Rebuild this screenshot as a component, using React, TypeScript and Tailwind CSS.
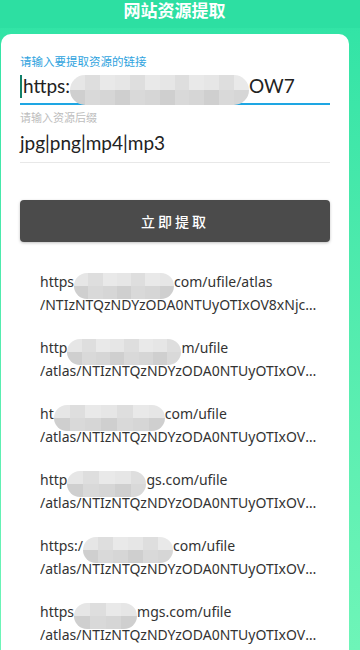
import React from 'react';

const font = { fontFamily: '"Noto Sans", "Noto Sans CJK SC", sans-serif' };
const inputFont = { fontFamily: 'Lato, "Noto Sans CJK SC", sans-serif' };

const greys = ['bg-[#e6e6e6]', 'bg-[#d6d6d6]', 'bg-[#dedede]', 'bg-[#cfcfcf]', 'bg-[#e9e9e9]', 'bg-[#d9d9d9]'];

// privacy mosaic blob sitting over the url text
const Mosaic: React.FC<{ w: number; h: number }> = ({ w, h }) => {
  const cols = Math.max(3, Math.round(w / 15));
  return (
    <span
      className="relative inline-flex flex-col overflow-hidden rounded-full align-middle blur-[0.6px]"
      style={{ width: w, height: h }}
    >
      {[0, 1].map((r) => (
        <span key={r} className="flex flex-1">
          {Array.from({ length: cols }).map((_, c) => (
            <span key={c} className={`flex-1 ${greys[(c * 2 + r * 3) % greys.length]}`} />
          ))}
        </span>
      ))}
    </span>
  );
};

const links = [
  { pre: 'https', w: 100, post: 'com/ufile/atlas', tail: '/NTIzNTQzNDYzODA0NTUyOTIxOV8xNjc4OTAxMjM0NTY3' },
  { pre: 'http', w: 114, post: 'm/ufile', tail: '/atlas/NTIzNTQzNDYzODA0NTUyOTIxOV8xNjc4OTAx' },
  { pre: 'ht', w: 111, post: 'com/ufile', tail: '/atlas/NTIzNTQzNDYzODA0NTUyOTIxOV8xNjc4OTAx' },
  { pre: 'http', w: 79, post: 'gs.com/ufile', tail: '/atlas/NTIzNTQzNDYzODA0NTUyOTIxOV8xNjc4OTAx' },
  { pre: 'https:/', w: 90, post: 'com/ufile', tail: '/atlas/NTIzNTQzNDYzODA0NTUyOTIxOV8xNjc4OTAx' },
  { pre: 'https', w: 63, post: 'mgs.com/ufile', tail: '/atlas/NTIzNTQzNDYzODA0NTUyOTIxOV8xNjc4OTAx' },
];

export default function App() {
  return (
    <div className="flex h-[650px] w-[360px] flex-col overflow-hidden bg-gradient-to-b from-[#2ee3a5] to-[#6ef5b8]" style={font}>
      {/* Header */}
      <div className="flex h-7 shrink-0 items-start justify-center bg-[#2ddfa2] pr-[11px]">
        <span className="text-[17px] font-bold leading-[22px] text-white">网站资源提取</span>
      </div>

      {/* Card */}
      <div className="ml-px mt-[6px] flex w-[348px] flex-1 flex-col rounded-t-[10px] bg-white px-[19px] pt-[21px]">
        <div className="text-[11.5px] leading-[14px] text-[#2ea3de]">请输入要提取资源的链接</div>
        <div className="flex h-[36px] items-center border-b-2 border-[#1ea6e3] text-[19px] text-[#222]" style={inputFont}>
          <span className="mr-px h-[23px] w-[2px] bg-[#11806a]" />
          <span>https:</span>
          <span className="relative top-[3px]">
            <Mosaic w={179} h={30} />
          </span>
          <span>OW7</span>
        </div>

        <div className="mt-[6px] text-[11px] leading-[14px] text-[#bdbdbd]">请输入资源后缀</div>
        <div className="flex h-[38px] items-center border-b border-[#e8e8e8] text-[19px] text-[#222]" style={inputFont}>
          jpg|png|mp4|mp3
        </div>

        <button className="mt-[37px] flex h-[42px] w-full items-center justify-center rounded-[4px] bg-[#4b4b4b] shadow-[0_1px_3px_rgba(0,0,0,0.25)]">
          <span className="text-[14px] font-medium tracking-[3px] text-white">立即提取</span>
        </button>

        {/* Result list */}
        <div className="ml-5 mt-[17px] flex w-[282px] flex-col">
          {links.map((l, i) => (
            <div key={i} className="flex h-[66px] flex-col justify-center text-[14px] leading-[20px] text-[#333]">
              <div className="flex items-center whitespace-nowrap">
                <span>{l.pre}</span>
                <span className="relative top-[4px] z-10">
                  <Mosaic w={l.w} h={26} />
                </span>
                <span>{l.post}</span>
              </div>
              <div className="truncate">{l.tail}</div>
            </div>
          ))}
        </div>
      </div>
    </div>
  );
}
